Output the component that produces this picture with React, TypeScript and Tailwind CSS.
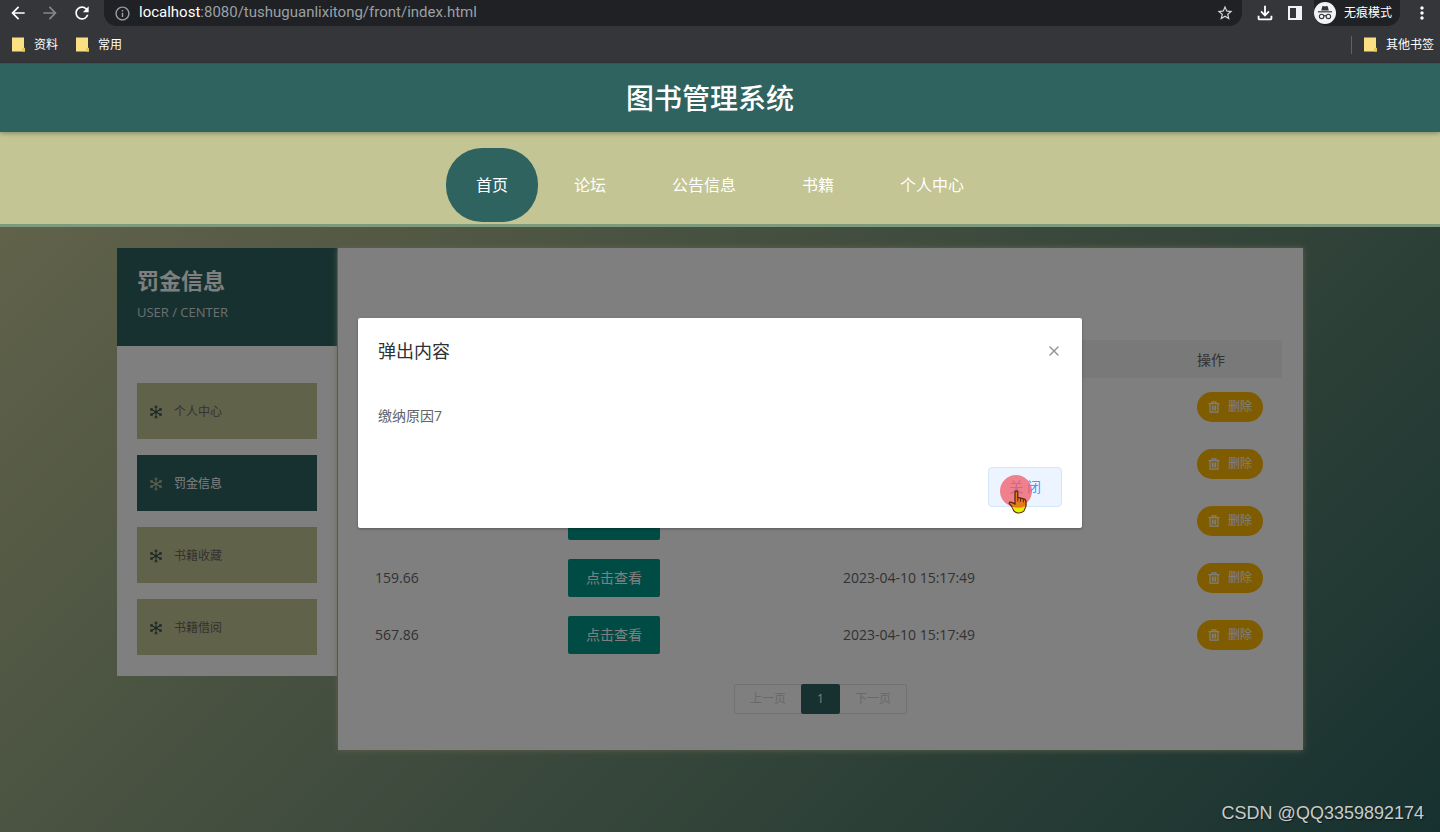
import React from "react";
import {
  MdArrowBack,
  MdArrowForward,
  MdInfoOutline,
  MdMoreVert,
  MdOutlineFileDownload,
  MdRefresh,
  MdStarBorder,
} from "react-icons/md";
import { X } from "lucide-react";

const navItems = ["首页", "论坛", "公告信息", "书籍", "个人中心"];
const sideItems = ["个人中心", "罚金信息", "书籍收藏", "书籍借阅"];

interface Fine {
  amount: string;
  time: string;
}

const fines: Fine[] = [
  { amount: "", time: "" },
  { amount: "", time: "" },
  { amount: "", time: "" },
  { amount: "159.66", time: "2023-04-10 15:17:49" },
  { amount: "567.86", time: "2023-04-10 15:17:49" },
];

function FolderIcon() {
  return (
    <svg width="14" height="15" viewBox="0 0 14 15" aria-hidden="true">
      <path d="M0 0.5h12v10l1 1v3H0z" fill="#fbe083" />
      <path d="M10 11h3v3.5h-3z" fill="#e9c75f" />
    </svg>
  );
}

function SidePanelIcon() {
  return (
    <svg width="14" height="14" viewBox="0 0 14 14" aria-hidden="true">
      <path fillRule="evenodd" d="M0 0h14v14H0zM2 2v10h6V2z" fill="#f1f3f4" />
    </svg>
  );
}

function IncognitoIcon() {
  return (
    <svg width="22" height="22" viewBox="0 0 22 22" aria-hidden="true">
      <circle cx="11" cy="11" r="11" fill="#f1f3f4" />
      <path d="M7.2 8.6 8.3 4.6q.3-.8 1.1-.5l1.6.5 1.6-.5q.8-.3 1.1.5l1.1 4z" fill="#35363a" />
      <path d="M4 9.2h14v1.2H4z" fill="#35363a" />
      <g fill="none" stroke="#35363a" strokeWidth="1.1">
        <circle cx="7.6" cy="14.4" r="2.2" />
        <circle cx="14.4" cy="14.4" r="2.2" />
        <path d="M9.8 14q1.2-.8 2.4 0" />
      </g>
    </svg>
  );
}

function SnowIcon({ className }: { className: string }) {
  return (
    <svg
      className={className}
      width="14"
      height="14"
      viewBox="0 0 14 14"
      fill="none"
      stroke="currentColor"
      strokeWidth="1"
      strokeLinecap="round"
      aria-hidden="true"
    >
      {[0, 60, 120, 180, 240, 300].map((angle) => (
        <path key={angle} transform={`rotate(${angle} 7 7)`} d="M7 7V0.6M5.8 1.6 7 3 8.2 1.6" />
      ))}
    </svg>
  );
}

function TrashIcon() {
  return (
    <svg
      width="12"
      height="12"
      viewBox="0 0 12 12"
      fill="none"
      stroke="currentColor"
      strokeWidth="1.2"
      aria-hidden="true"
    >
      <path d="M0.5 2.6h11M4 2.4V0.8h4v1.6M2 2.8v8.4h8V2.8M4.4 4.6v4.8M6 4.6v4.8M7.6 4.6v4.8" />
    </svg>
  );
}

function ClickPointer() {
  return (
    <svg
      className="pointer-events-none absolute top-2 left-3"
      width="34"
      height="42"
      viewBox="0 0 34 42"
      aria-hidden="true"
    >
      <circle cx="16" cy="16" r="16" fill="#f25a66" fillOpacity="0.75" />
      <path
        d="M15 17.5q0-1.5 1.4-1.5t1.4 1.5v5l6 1.4q2.2.6 2.2 3v4l-2.2 5q-5 4-9.8 0l-2-4-2.8-3.6q.4-1.8 2.4-1l3.4 1.6z"
        fill="#e87a1c"
        stroke="#5a2a10"
        strokeWidth="1.3"
      />
      <path d="M12 32q7 2 13.4-.8l-2 4.6q-4.6 3.4-8.6.2z" fill="#e4f000" />
      <path d="M17.8 22.5v4M20.6 23v3.8M23.4 24v3.4" stroke="#5a2a10" strokeWidth="1" />
    </svg>
  );
}

function BrowserBar() {
  return (
    <div className="border-b border-[#50565a] bg-[#35363a] text-white">
      <div className="flex h-[26px] items-center">
        <div className="flex items-center gap-3 pr-3 pl-2">
          <button aria-label="后退"><MdArrowBack size={20} /></button>
          <button aria-label="前进" className="text-[#85878a]"><MdArrowForward size={20} /></button>
          <button aria-label="刷新"><MdRefresh size={20} /></button>
        </div>
        <div className="flex h-full flex-1 items-center rounded-b-[13px] bg-[#202124] pr-2 pl-[10px]">
          <MdInfoOutline size={17} className="mr-2 text-[#9aa0a6]" />
          <span className="flex-1 pb-0.5 font-['Roboto',sans-serif] text-[15px] text-[#9aa0a6]">
            <span className="text-white">localhost</span>:8080/tushuguanlixitong/front/index.html
          </span>
          <button aria-label="收藏"><MdStarBorder size={18} className="text-[#d5d7d9]" /></button>
        </div>
        <div className="flex h-full items-center gap-3 pr-2 pl-3">
          <button aria-label="下载"><MdOutlineFileDownload size={22} /></button>
          <button aria-label="侧边栏"><SidePanelIcon /></button>
          <button className="flex h-full items-center gap-2 rounded-b-[13px] bg-[#202124] pr-2 text-[12px]">
            <IncognitoIcon />
            无痕模式
          </button>
          <button aria-label="更多"><MdMoreVert size={20} /></button>
        </div>
      </div>
      <div className="flex h-[37px] items-center justify-between pr-[6px] pl-3 text-[12px]">
        <div className="flex gap-[18px]">
          <a href="#" className="flex items-center gap-2"><FolderIcon />资料</a>
          <a href="#" className="flex items-center gap-2"><FolderIcon />常用</a>
        </div>
        <a href="#" className="flex items-center gap-2 border-l border-[#5f6368] pl-3">
          <FolderIcon />其他书签
        </a>
      </div>
    </div>
  );
}

function Sidebar() {
  return (
    <aside className="w-[220px] shrink-0 bg-white">
      <div className="h-[98px] bg-[#2e6360] px-5 pt-4 text-white">
        <h2 className="text-[22px] leading-8 font-bold">罚金信息</h2>
        <p className="text-[13px] leading-8 text-[#d8dede]">USER / CENTER</p>
      </div>
      <ul className="flex flex-col gap-4 px-5 pt-[37px] pb-[21px]">
        {sideItems.map((item) => (
          <li key={item}>
            <a
              href="#"
              className={
                item === "罚金信息"
                  ? "flex h-14 items-center gap-[11px] bg-[#2e6360] px-3 pt-0.5 text-[12px] text-white"
                  : "flex h-14 items-center gap-[11px] bg-[#c3c594] px-3 pt-0.5 text-[12px] text-[#666666]"
              }
            >
              <SnowIcon className={item === "罚金信息" ? "text-[#c3c594]" : "text-[#2e4a48]"} />
              {item}
            </a>
          </li>
        ))}
      </ul>
    </aside>
  );
}

function FinesPanel() {
  return (
    <section className="min-h-[502px] flex-1 bg-white px-[21px] pt-[92px] pb-[35px] shadow-[0_0_6px_#c3c594]">
      <table className="w-full table-fixed text-left text-[14px] text-[#666666]">
        <colgroup>
          <col className="w-[193px]" />
          <col className="w-[275px]" />
          <col className="w-[354px]" />
          <col />
        </colgroup>
        <thead>
          <tr className="h-[38px] bg-[#f2f2f2]">
            <td />
            <td />
            <td />
            <th scope="col" className="px-4 font-normal">操作</th>
          </tr>
        </thead>
        <tbody>
          {fines.map((fine, i) => (
            <tr key={i} className="h-[57px]">
              <td className="px-4">{fine.amount}</td>
              <td className="px-4">
                <button className="h-[38px] rounded-xs bg-[#009688] px-[18px] text-white">
                  点击查看
                </button>
              </td>
              <td className="px-4">{fine.time}</td>
              <td className="px-4">
                <button className="flex h-[30px] items-center gap-2 rounded-full bg-[#ffb800] px-[11px] text-[12px] text-white">
                  <TrashIcon />
                  删除
                </button>
              </td>
            </tr>
          ))}
        </tbody>
      </table>
      <div className="mt-[21px] flex justify-center text-[12px] text-[#d2d2d2]">
        <button className="h-[30px] rounded-l-xs border border-[#e2e2e2] px-[15px]">上一页</button>
        <button className="relative -mx-px h-[30px] rounded-xs bg-[#2e6360] px-4 text-white">1</button>
        <button className="h-[30px] rounded-r-xs border border-[#e2e2e2] px-[15px]">下一页</button>
      </div>
    </section>
  );
}

function Dialog() {
  return (
    <div
      role="dialog"
      aria-labelledby="dialog-title"
      className="absolute top-[91px] left-1/2 w-[724px] max-w-full -translate-x-1/2 rounded-xs bg-white shadow-[0_1px_3px_rgba(0,0,0,0.3)]"
    >
      <div className="flex items-center justify-between px-5 pt-[21px] pb-[10px]">
        <h2 id="dialog-title" className="text-[18px] leading-6 text-[#303133]">弹出内容</h2>
        <button aria-label="关闭弹窗" className="text-[#909399]"><X size={16} strokeWidth={2} /></button>
      </div>
      <p className="px-5 py-[30px] text-[14px] leading-[26px] text-[#606266]">缴纳原因7</p>
      <div className="flex justify-end px-5 pt-2 pb-[21px]">
        <div className="relative">
          <button className="h-10 rounded-sm border border-[#d3e6fa] bg-[#ecf5ff] px-5 pb-0.5 text-[14px] text-[#409eff]">
            关 闭
          </button>
          <ClickPointer />
        </div>
      </div>
    </div>
  );
}

export default function App() {
  return (
    <div className="flex min-h-screen flex-col font-['Open_Sans','Noto_Sans_CJK_SC',sans-serif]">
      <BrowserBar />
      <header className="relative z-10 bg-[#2e6360] pr-5 shadow-[0_1px_5px_rgba(0,0,0,0.35)]">
        <h1 className="text-center text-[28px] leading-[68px] font-medium text-white">图书管理系统</h1>
      </header>
      <nav className="flex justify-center gap-[6px] border-b-[3px] border-[#7d9a7c] bg-[#c3c594] pt-4 pb-[2px]">
        {navItems.map((item) => (
          <a
            key={item}
            href="#"
            className={
              item === "首页"
                ? "flex h-[74px] items-center rounded-[36px] bg-[#2e6360] px-[30px] text-[16px] text-white"
                : "flex h-[74px] items-center rounded-[36px] px-[30px] text-[16px] text-white"
            }
          >
            {item}
          </a>
        ))}
      </nav>
      <main className="relative flex-1 bg-[linear-gradient(135deg,#c3c594,#2e6360)]">
        <div className="pt-[21px] pr-5 pb-10">
          <div className="mx-auto flex max-w-[1186px] items-start gap-px">
            <Sidebar />
            <FinesPanel />
          </div>
        </div>
        <div className="absolute inset-0 bg-black/50" />
        <Dialog />
        <p className="absolute right-4 bottom-[5px] font-['Liberation_Sans',sans-serif] text-[18px] leading-7 text-[#c8cccc] [text-shadow:1px_1px_1px_rgba(0,0,0,0.5)]">
          CSDN @QQ3359892174
        </p>
      </main>
    </div>
  );
}
